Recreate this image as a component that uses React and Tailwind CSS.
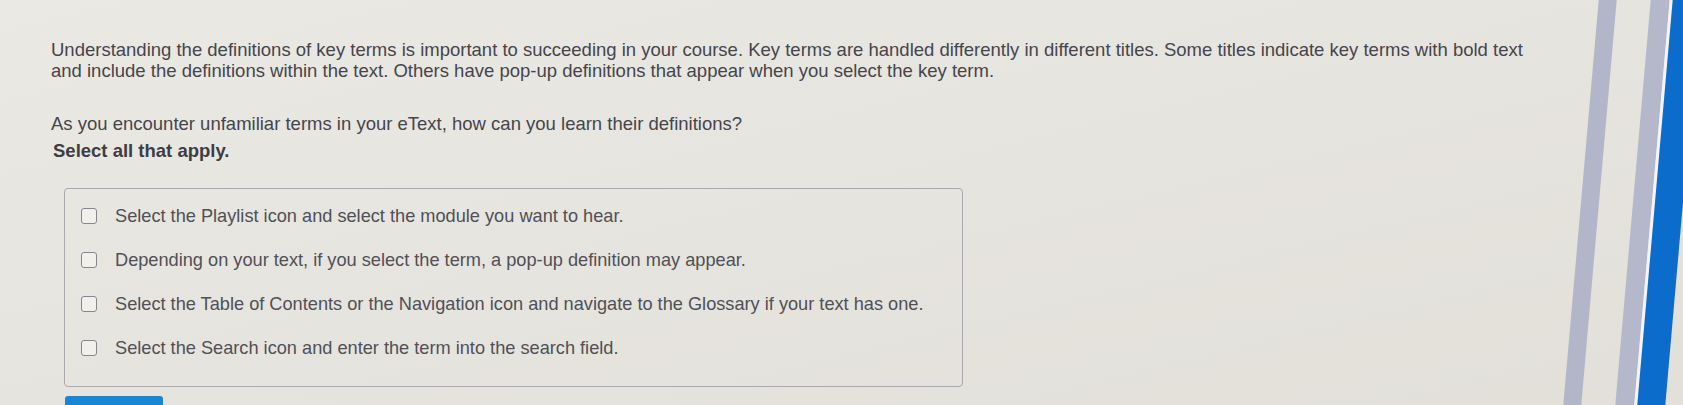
import React from "react";

const options = [
  "Select the Playlist icon and select the module you want to hear.",
  "Depending on your text, if you select the term, a pop-up definition may appear.",
  "Select the Table of Contents or the Navigation icon and navigate to the Glossary if your text has one.",
  "Select the Search icon and enter the term into the search field.",
];

const App = () => {
  return (
    <div
      className="flex h-[405px] w-[1683px] overflow-hidden bg-gradient-to-br from-[#ebe9e4] via-[#e6e4de] to-[#e2e0d9] text-[#45454b]"
      style={{ fontFamily: '"Liberation Sans", Arial, sans-serif' }}
    >
      {/* Question content */}
      <div className="flex-1 pl-[51px] pt-[39px]">
        <p className="whitespace-nowrap text-[18.5px] leading-[21px]">
          Understanding the definitions of key terms is important to succeeding in your course. Key terms are handled
          differently in different titles. Some titles indicate key terms with bold text
          <br />
          and include the definitions within the text. Others have pop-up definitions that appear when you select the
          key term.
        </p>
        <p className="mt-[32px] text-[18.5px] leading-[21px]">
          As you encounter unfamiliar terms in your eText, how can you learn their definitions?
        </p>
        <p className="mt-[6px] pl-[2px] text-[18.5px] font-bold leading-[21px] text-[#3d3d43]">
          Select all that apply.
        </p>

        {/* Answer box */}
        <div className="ml-[13px] mt-[27px] flex h-[199px] w-[899px] flex-col gap-[22px] rounded-[4px] border border-[#aaaaae] pl-[16px] pt-[16px]">
          {options.map((opt) => (
            <label key={opt} className="flex items-center gap-[18px] text-[18.2px] leading-[22px] text-[#505056]">
              <span className="h-[16px] w-[16px] shrink-0 rounded-[3px] border-[1.5px] border-[#86868c] bg-[#f1f0ec]" />
              <span className="whitespace-nowrap">{opt}</span>
            </label>
          ))}
        </div>

        <div className="ml-[14px] mt-[9px] h-[20px] w-[98px] rounded-t-[3px] bg-[#1a86d3]" />
      </div>

      {/* Edge of the window in the photo */}
      <div className="flex w-[140px] shrink-0 -skew-x-[5deg] pl-[38px]">
        <div className="w-[18px] bg-[#b3b6c8]" />
        <div className="w-[34px]" />
        <div className="w-[19px] bg-[#b5b8ca]" />
        <div className="w-[3px] bg-[#f4f4f6]" />
        <div className="flex-1 bg-[#0b6ccb]" />
      </div>
    </div>
  );
};

export default App;
